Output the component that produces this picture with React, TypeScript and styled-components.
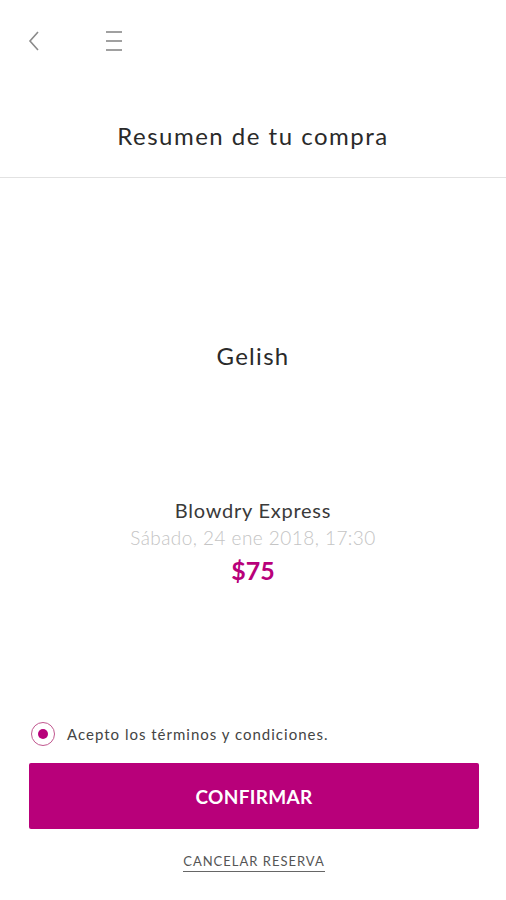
import React, { useState } from "react";
import styled, { createGlobalStyle } from "styled-components";

const GlobalStyle = createGlobalStyle`
  html, body {
    margin: 0;
    padding: 0;
    background: #ffffff;
  }
  body {
    font-family: "Lato", "Open Sans", sans-serif;
    color: #333;
  }
`;

const MAGENTA = "#b8007a";

const Screen = styled.div`
  width: 506px;
  height: 900px;
  display: flex;
  flex-direction: column;
  background: #fff;
`;

const TopBar = styled.div`
  height: 82px;
  display: flex;
  align-items: center;
  padding: 0 0 0 24px;
  gap: 60px;
`;

const IconButton = styled.button`
  border: none;
  background: none;
  padding: 0;
  width: 20px;
  height: 24px;
  display: flex;
  align-items: center;
  justify-content: center;
  color: #8a8a8a;
  cursor: pointer;
`;

const Header = styled.div`
  height: 96px;
  box-sizing: border-box;
  padding-top: 12px;
  display: flex;
  align-items: center;
  justify-content: center;
  border-bottom: 1px solid #e2e2e2;
`;

const Title = styled.h1`
  margin: 0;
  font-weight: 400;
  font-size: 24px;
  color: #2a2a2a;
  letter-spacing: 1.5px;
`;

const Body = styled.div`
  flex: 1;
  display: flex;
  flex-direction: column;
  align-items: center;
`;

const Service = styled.div`
  margin-top: 163px;
  font-size: 24px;
  color: #2a2a2a;
  letter-spacing: 1.3px;
`;

const Detail = styled.div`
  margin-top: 126px;
  display: flex;
  flex-direction: column;
  align-items: center;
`;

const Name = styled.div`
  font-size: 20px;
  color: #3a3a3a;
  letter-spacing: 0.75px;
  line-height: 28px;
`;

const DateText = styled.div`
  font-size: 19px;
  font-weight: 300;
  color: #c4c4c4;
  letter-spacing: 0.45px;
  line-height: 28px;
`;

const Price = styled.div`
  font-size: 25px;
  font-weight: 700;
  color: ${MAGENTA};
  line-height: 36px;
`;

const Footer = styled.div`
  padding: 0 27px 28px 29px;
  display: flex;
  flex-direction: column;
`;

const Terms = styled.label`
  display: flex;
  align-items: center;
  gap: 12px;
  font-size: 15px;
  color: #444;
  letter-spacing: 1px;
  padding-left: 2px;
  margin-bottom: 17px;
  cursor: pointer;
`;

const Radio = styled.span<{ $on: boolean }>`
  width: 22px;
  height: 22px;
  border-radius: 50%;
  border: 1.5px solid #c1578f;
  display: flex;
  align-items: center;
  justify-content: center;
  &::after {
    content: "";
    width: 10px;
    height: 10px;
    border-radius: 50%;
    background: ${MAGENTA};
    opacity: ${(p) => (p.$on ? 1 : 0)};
  }
`;

const Confirm = styled.button`
  height: 66px;
  border: none;
  border-radius: 2px;
  background: ${MAGENTA};
  color: #fff;
  font-family: inherit;
  font-weight: 700;
  font-size: 19px;
  letter-spacing: 0.3px;
  cursor: pointer;
`;

const Cancel = styled.a`
  align-self: center;
  margin-top: 24px;
  font-size: 13px;
  color: #555;
  letter-spacing: 1px;
  padding-bottom: 2px;
  border-bottom: 1.5px solid #666;
  cursor: pointer;
`;

export default function App() {
  const [accepted, setAccepted] = useState(true);

  return (
    <>
      <GlobalStyle />
      <Screen>
        <TopBar>
          <IconButton aria-label="volver">
            <svg width="14" height="22" viewBox="0 0 14 22" fill="none">
              <path d="M11 2 L3 11 L11 20" stroke="#8a8a8a" strokeWidth="1.6" />
            </svg>
          </IconButton>
          <IconButton aria-label="menú">
            <svg width="18" height="22" viewBox="0 0 18 22" fill="none">
              <path d="M1 2 H17 M1 11 H17 M1 20 H17" stroke="#a0a0a0" strokeWidth="1.8" />
            </svg>
          </IconButton>
        </TopBar>
        <Header>
          <Title>Resumen de tu compra</Title>
        </Header>
        <Body>
          <Service>Gelish</Service>
          <Detail>
            <Name>Blowdry Express</Name>
            <DateText>Sábado, 24 ene 2018, 17:30</DateText>
            <Price>$75</Price>
          </Detail>
        </Body>
        <Footer>
          <Terms onClick={() => setAccepted(!accepted)}>
            <Radio $on={accepted} />
            Acepto los términos y condiciones.
          </Terms>
          <Confirm>CONFIRMAR</Confirm>
          <Cancel>CANCELAR RESERVA</Cancel>
        </Footer>
      </Screen>
    </>
  );
}
